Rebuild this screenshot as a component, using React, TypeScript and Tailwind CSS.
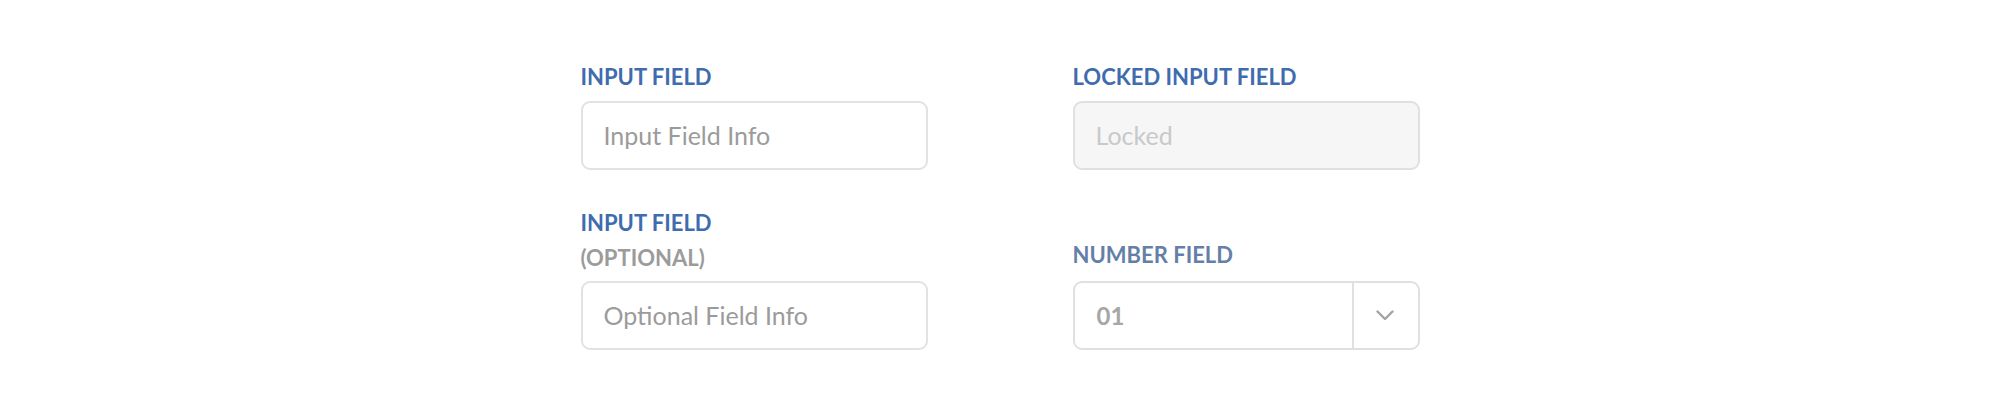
import React from "react";

const font = { fontFamily: "Lato, 'Noto Sans', sans-serif" };

export default function App() {
  return (
    <div className="w-[2000px] h-[420px] bg-white" style={font}>
      <div className="pt-[59px] grid grid-cols-[347px_347px] gap-x-[145px] justify-center">
        <div className="flex flex-col">
          <div className="text-[22px] leading-[35px] font-bold text-[#3f6cae]">INPUT FIELD</div>
          <div className="mt-[7px] h-[69px] rounded-[9px] border-2 border-[#e2e2e2] bg-white flex items-center pl-[21px] text-[25px] text-[#9b9b9b]">
            Input Field Info
          </div>
        </div>
        <div className="flex flex-col">
          <div className="text-[22px] leading-[35px] font-bold text-[#3f6cae]">LOCKED INPUT FIELD</div>
          <div className="mt-[7px] h-[69px] rounded-[9px] border-2 border-[#e0e0e0] bg-[#f6f6f6] flex items-center pl-[21px] text-[25px] text-[#c9c9c9]">
            Locked
          </div>
        </div>
        <div className="flex flex-col justify-end mt-[35px]">
          <div className="text-[22px] leading-[35px] font-bold text-[#3f6cae]">INPUT FIELD</div>
          <div className="text-[22px] leading-[35px] font-bold text-[#9b9b9b]">(OPTIONAL)</div>
          <div className="mt-[6px] h-[69px] rounded-[9px] border-2 border-[#e2e2e2] bg-white flex items-center pl-[21px] text-[25px] text-[#9b9b9b]">
            Optional Field Info
          </div>
        </div>
        <div className="flex flex-col justify-end mt-[35px]">
          <div className="text-[22px] leading-[35px] font-bold text-[#6580a8]">NUMBER FIELD</div>
          <div className="mt-[9px] h-[69px] rounded-[9px] border-2 border-[#e0e0e0] bg-white flex items-stretch">
            <div className="flex-1 flex items-center pl-[22px] text-[24px] font-bold text-[#a6a6a6]">01</div>
            <div className="w-[66px] border-l-2 border-[#e0e0e0] flex items-center justify-center pr-[2px]">
              <svg width="18" height="11" viewBox="0 0 18 11" fill="none">
                <path d="M1.5 1.5 L9 9 L16.5 1.5" stroke="#a3a3a3" strokeWidth="2.4" strokeLinecap="round" strokeLinejoin="round" />
              </svg>
            </div>
          </div>
        </div>
      </div>
    </div>
  );
}
